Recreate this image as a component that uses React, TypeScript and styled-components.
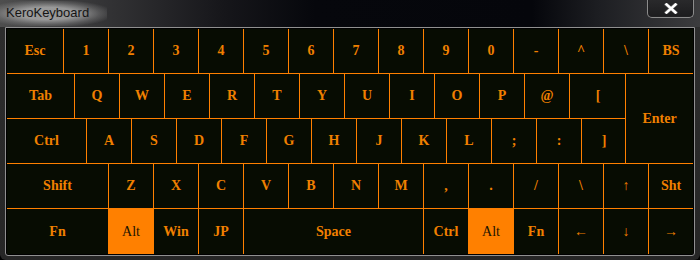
import React from "react";
import styled, { createGlobalStyle } from "styled-components";

const GlobalStyle = createGlobalStyle`
  html, body {
    margin: 0;
    padding: 0;
    background: #000;
  }
`;

type KeyDef = { label: string; w?: number; hot?: boolean };

const k = (label: string, w = 45, hot = false): KeyDef => ({ label, w, hot });

const row1: KeyDef[] = [
  k("Esc", 57), k("1"), k("2"), k("3"), k("4"), k("5"), k("6"), k("7"),
  k("8"), k("9"), k("0"), k("-"), k("^"), k("\\"), { label: "BS" },
];

const row2: KeyDef[] = [
  k("Tab", 68), k("Q"), k("W"), k("E"), k("R"), k("T"), k("Y"), k("U"),
  k("I"), k("O"), k("P"), k("@"), k("[", 56),
];

const row3: KeyDef[] = [
  k("Ctrl", 80), k("A"), k("S"), k("D"), k("F"), k("G"), k("H"), k("J"),
  k("K"), k("L"), k(";"), k(":"), k("]", 44),
];

const row4: KeyDef[] = [
  k("Shift", 102), k("Z"), k("X"), k("C"), k("V"), k("B"), k("N"), k("M"),
  k(","), k("."), k("/"), k("\\"), k("↑"), { label: "Sht" },
];

const row5: KeyDef[] = [
  k("Fn", 102), k("Alt", 45, true), k("Win"), k("JP"), k("Space", 180),
  k("Ctrl"), k("Alt", 45, true), k("Fn"), k("←"), k("↓"), { label: "→" },
];

export default function App() {
  const renderRow = (keys: KeyDef[], last = false) => (
    <Row $last={last}>
      {keys.map((key, i) => (
        <Key key={i} $w={key.w} $hot={key.hot}>
          {key.label}
        </Key>
      ))}
    </Row>
  );

  return (
    <>
      <GlobalStyle />
      <Window>
        <TitleBar>
          <Title>KeroKeyboard</Title>
          <CloseButton aria-label="Close">
            <svg width="14" height="11" viewBox="0 0 14 11">
              <path d="M2.5 1.5 L11.5 9.5 M11.5 1.5 L2.5 9.5" stroke="#6a6a6a" strokeWidth="3.6" strokeLinecap="square" />
              <path d="M2.5 1.5 L11.5 9.5 M11.5 1.5 L2.5 9.5" stroke="#fff" strokeWidth="2.4" strokeLinecap="square" />
            </svg>
          </CloseButton>
        </TitleBar>
        <Panel>
          <Board>
            {renderRow(row1)}
            <Middle>
              <MiddleRows>
                {renderRow(row2)}
                {renderRow(row3)}
              </MiddleRows>
              <EnterKey>Enter</EnterKey>
            </Middle>
            {renderRow(row4)}
            {renderRow(row5, true)}
          </Board>
        </Panel>
      </Window>
    </>
  );
}

const Window = styled.div`
  width: 700px;
  height: 260px;
  box-sizing: border-box;
  display: flex;
  flex-direction: column;
  background: linear-gradient(180deg, #2e2e2e 0%, #262626 100%);
  border-radius: 0 0 6px 6px;
  overflow: hidden;
`;

const TitleBar = styled.div`
  height: 27px;
  flex: 0 0 27px;
  display: flex;
  align-items: flex-start;
  justify-content: space-between;
  padding: 0 6px 0 0;
  background: linear-gradient(
    90deg,
    #4e4e4e 0%,
    #353537 14%,
    #16161a 32%,
    #06070c 45%,
    #05060b 76%,
    #1e1f23 86%,
    #3c3c3e 100%
  );
`;

const Title = styled.span`
  margin-top: 1px;
  padding: 4px 18px 6px 6px;
  font-family: "Liberation Sans", Arial, sans-serif;
  font-size: 13px;
  color: #141414;
  background: radial-gradient(
    ellipse at 45% 50%,
    rgba(190, 190, 190, 0.7) 35%,
    rgba(160, 160, 160, 0.3) 62%,
    rgba(150, 150, 150, 0) 80%
  );
`;

const CloseButton = styled.button`
  width: 47px;
  height: 19px;
  margin-top: -1px;
  padding: 0;
  display: flex;
  align-items: center;
  justify-content: center;
  border: 1px solid #8c8c8c;
  border-top: none;
  border-radius: 0 0 5px 5px;
  background: linear-gradient(180deg, #2a2a2c 0%, #1c1c1e 100%);
  box-shadow: inset 0 0 0 1px #202022;
`;

const Panel = styled.div`
  margin: 0 5px;
  padding: 1px;
  flex: 0 0 auto;
  border: 1px solid #909090;
  border-radius: 0 0 3px 3px;
  background: #000;
`;

const Board = styled.div`
  display: flex;
  flex-direction: column;
  background: #070c02;
`;

const Row = styled.div<{ $last?: boolean }>`
  display: flex;
  height: 45px;
  box-sizing: border-box;
  border-bottom: ${(p) => (p.$last ? "none" : "1px solid #ff8000")};
`;

const Middle = styled.div`
  display: flex;
  border-bottom: 1px solid #ff8000;
`;

const MiddleRows = styled.div`
  display: flex;
  flex-direction: column;
  width: 618px;
  flex: 0 0 618px;

  & > div:last-child {
    border-bottom: none;
    height: 44px;
  }
`;

const Key = styled.div<{ $w?: number; $hot?: boolean }>`
  flex: ${(p) => (p.$w ? `0 0 ${p.$w}px` : "1 1 auto")};
  box-sizing: border-box;
  display: flex;
  align-items: center;
  justify-content: center;
  border-right: 1px solid #ff8000;
  background: ${(p) => (p.$hot ? "#ff8000" : "transparent")};
  color: ${(p) => (p.$hot ? "#1c1400" : "#f08000")};
  font-family: "Liberation Serif", "Times New Roman", serif;
  font-weight: ${(p) => (p.$hot ? 400 : 700)};
  font-size: 14px;

  &:last-child {
    border-right: none;
  }
`;

const EnterKey = styled.div`
  flex: 1 1 auto;
  display: flex;
  align-items: center;
  justify-content: center;
  border-left: 1px solid #ff8000;
  color: #f08000;
  font-family: "Liberation Serif", "Times New Roman", serif;
  font-weight: 700;
  font-size: 14px;
`;
